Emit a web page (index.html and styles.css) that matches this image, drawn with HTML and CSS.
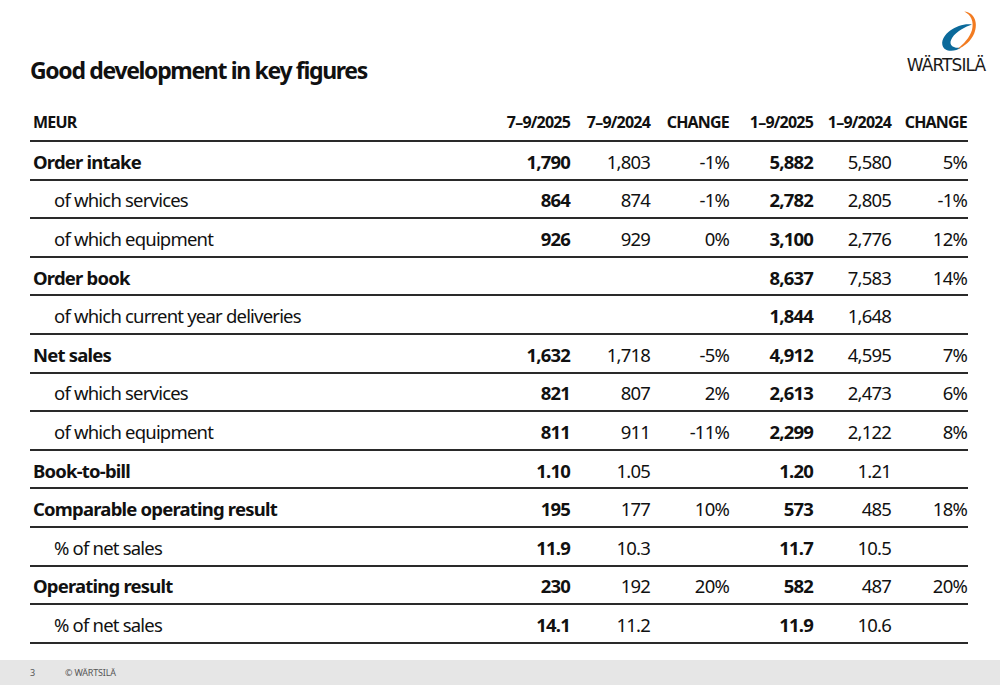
FILE: index.html
```html
<!DOCTYPE html>
<html lang="en">
<head>
<meta charset="utf-8">
<link rel="stylesheet" href="styles.css">
</head>
<body>
<div class="slide">
  <header class="top">
    <h1 class="title">Good development in key figures</h1>
    <div class="logo">
      <svg class="swirl" viewBox="0 0 60 45" width="66" height="49.5" aria-hidden="true">
        <path d="M40 16 C28 14 12 24 13 34 C14 41 24 41 30 37 C22 38 18 34 22 28 C26 22 34 18 40 16 Z" fill="#0b6a9b"/>
        <path d="M33 4 C42 5 46 14 42 24 C39 31 33 36 27 38 C32 34 38 28 40 21 C42 13 39 7 33 4 Z" fill="#f27b21"/>
      </svg>
      <span class="logo-text">WÄRTSILÄ</span>
    </div>
  </header>
  <table class="figures">
    <thead>
      <tr><th class="label">MEUR</th><th>7–9/2025</th><th>7–9/2024</th><th>CHANGE</th><th>1–9/2025</th><th>1–9/2024</th><th>CHANGE</th></tr>
    </thead>
    <tbody>
      <tr class="main"><td class="label">Order intake</td><td class="b">1,790</td><td>1,803</td><td>-1%</td><td class="b">5,882</td><td>5,580</td><td>5%</td></tr>
      <tr class="sub"><td class="label">of which services</td><td class="b">864</td><td>874</td><td>-1%</td><td class="b">2,782</td><td>2,805</td><td>-1%</td></tr>
      <tr class="sub"><td class="label">of which equipment</td><td class="b">926</td><td>929</td><td>0%</td><td class="b">3,100</td><td>2,776</td><td>12%</td></tr>
      <tr class="main"><td class="label">Order book</td><td class="b"></td><td></td><td></td><td class="b">8,637</td><td>7,583</td><td>14%</td></tr>
      <tr class="sub"><td class="label">of which current year deliveries</td><td class="b"></td><td></td><td></td><td class="b">1,844</td><td>1,648</td><td></td></tr>
      <tr class="main"><td class="label">Net sales</td><td class="b">1,632</td><td>1,718</td><td>-5%</td><td class="b">4,912</td><td>4,595</td><td>7%</td></tr>
      <tr class="sub"><td class="label">of which services</td><td class="b">821</td><td>807</td><td>2%</td><td class="b">2,613</td><td>2,473</td><td>6%</td></tr>
      <tr class="sub"><td class="label">of which equipment</td><td class="b">811</td><td>911</td><td>-11%</td><td class="b">2,299</td><td>2,122</td><td>8%</td></tr>
      <tr class="main"><td class="label">Book-to-bill</td><td class="b">1.10</td><td>1.05</td><td></td><td class="b">1.20</td><td>1.21</td><td></td></tr>
      <tr class="main"><td class="label">Comparable operating result</td><td class="b">195</td><td>177</td><td>10%</td><td class="b">573</td><td>485</td><td>18%</td></tr>
      <tr class="sub"><td class="label">% of net sales</td><td class="b">11.9</td><td>10.3</td><td></td><td class="b">11.7</td><td>10.5</td><td></td></tr>
      <tr class="main"><td class="label">Operating result</td><td class="b">230</td><td>192</td><td>20%</td><td class="b">582</td><td>487</td><td>20%</td></tr>
      <tr class="sub"><td class="label">% of net sales</td><td class="b">14.1</td><td>11.2</td><td></td><td class="b">11.9</td><td>10.6</td><td></td></tr>
    </tbody>
  </table>
  <footer class="foot">
    <span class="page-no">3</span>
    <span class="copy">© WÄRTSILÄ</span>
  </footer>
</div>
</body>
</html>
```
FILE: styles.css
```css
* { box-sizing: border-box; }
html, body { margin: 0; padding: 0; background: #fff; }
body {
  font-family: "Noto Sans", "Open Sans", sans-serif;
  letter-spacing: -0.05em;
  color: #111;
}
.slide {
  width: 1000px;
  height: 685px;
  display: flex;
  flex-direction: column;
  overflow: hidden;
}
.top {
  display: flex;
  justify-content: space-between;
  align-items: flex-start;
  padding: 12px 12px 0 30px;
  height: 103px;
}
.title {
  margin: 43px 0 0 0;
  font-size: 23px;
  font-weight: 700;
  line-height: 30px;
  letter-spacing: -0.058em;
}
.logo {
  display: flex;
  flex-direction: column;
  align-items: flex-start;
  width: 84px;
}
.swirl { display: block; margin-left: 24px; margin-top: -5px; }
.logo-text {
  align-self: center;
  font-family: "DejaVu Sans", sans-serif;
  font-size: 17px;
  letter-spacing: -0.9px;
  margin-top: -2px;
  color: #1a1a1a;
}
.figures {
  margin-left: 30px;
  width: 938px;
  border-collapse: collapse;
  table-layout: fixed;
}
.figures th, .figures td {
  padding: 0 1px 0 0;
  text-align: right;
  white-space: nowrap;
}
.figures th {
  font-size: 16px;
  font-weight: 700;
  height: 38px;
}
.figures td { font-size: 18.5px; height: 38.6px; padding-top: 2px; }
.figures tr { border-bottom: 2px solid #2a2a2a; }
.figures th:nth-child(1) { width: 461px; }
.figures th:nth-child(2) { width: 80px; }
.figures th:nth-child(3) { width: 80px; }
.figures th:nth-child(4) { width: 79px; }
.figures th:nth-child(5) { width: 84px; }
.figures th:nth-child(6) { width: 78px; }
.figures th:nth-child(7) { width: 76px; }
.figures .label { text-align: left; padding-left: 3px; }
.main .label { font-weight: 700; }
.sub .label { padding-left: 24px; }
.figures td.b { font-weight: 700; }
.foot {
  margin-top: auto;
  height: 25px;
  background: #e6e6e6;
  display: flex;
  align-items: center;
  font-size: 9px;
  letter-spacing: -0.02em;
  color: #555;
  padding-left: 30px;
}
.page-no { width: 35px; }
```
